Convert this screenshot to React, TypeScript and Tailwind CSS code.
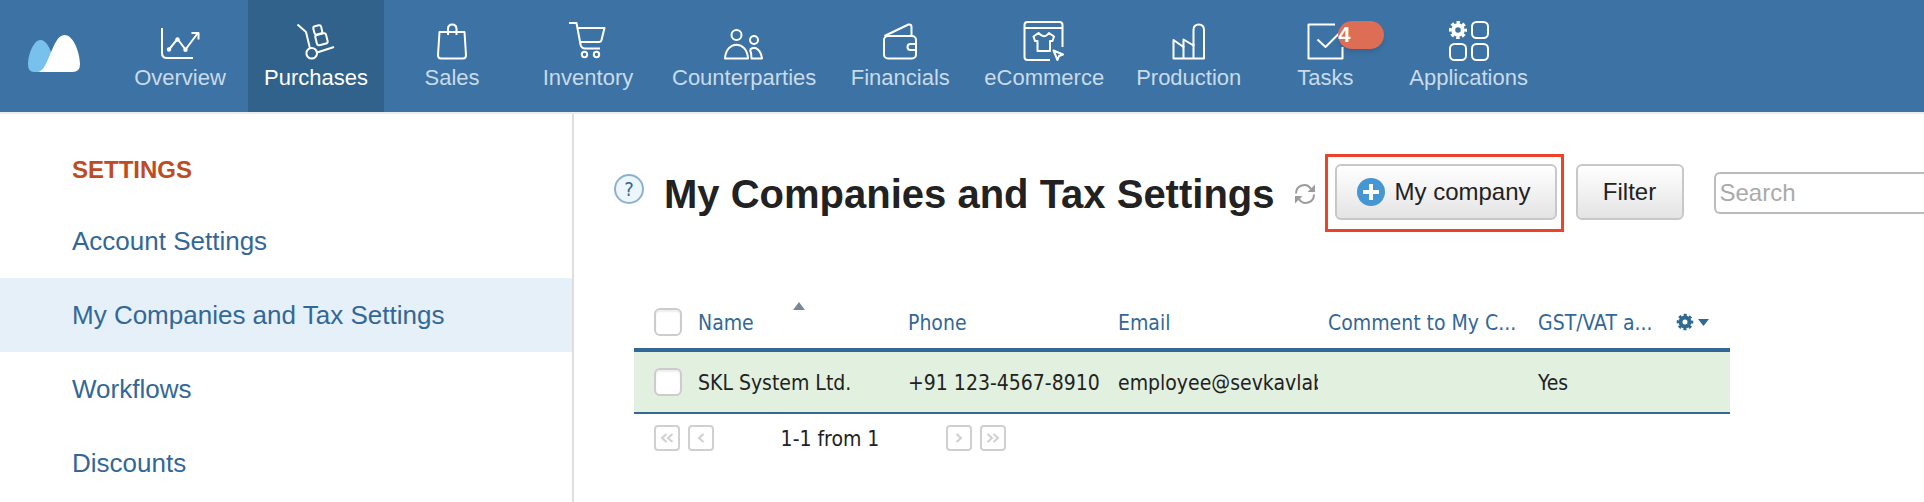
import type { ReactNode } from "react";

const navItems: { label: string; icon: ReactNode; active?: boolean; badge?: string }[] = [
  {
    label: "Overview",
    icon: (
      <>
        <path d="M3 7V32Q3 37 8 37H34" />
        <path d="M10 28.500L18.500 18L26.500 28.500L38.500 12.500" />
        <path d="M32.500 12H39.500V18.500" />
        <g fill="currentColor" stroke="none">
          <circle cx="10" cy="28.500" r="2.200" />
          <circle cx="18.500" cy="18.500" r="2.200" />
          <circle cx="26.500" cy="28.800" r="2.200" />
        </g>
      </>
    ),
  },
  {
    label: "Purchases",
    active: true,
    icon: (
      <>
        <path d="M2.500 3.500L11 11L15 27.500" />
        <circle cx="16.700" cy="32.300" r="5.300" />
        <path d="M22 31.500L39 26" />
        <rect x="18.800" y="4.700" width="8" height="8.500" rx="2" transform="rotate(-14 22.800 9)" />
        <rect x="21" y="13" width="11" height="10.500" rx="2" transform="rotate(-14 26.500 18.300)" />
      </>
    ),
  },
  {
    label: "Sales",
    icon: (
      <>
        <path d="M8.500 11H33.500L35 34Q35 37.500 32 37.500H10Q7 37.500 7 34Z" />
        <path d="M17 14V8Q17 3.500 21.250 3.500Q25.500 3.500 25.500 8V14" />
      </>
    ),
  },
  {
    label: "Inventory",
    icon: (
      <>
        <path d="M2 2H9.500L13.500 23.500Q14.500 27.500 18 27.500H33" />
        <path d="M10.500 7H37.500L34.500 19Q34 21 32 21H13" />
        <circle cx="17.500" cy="33.500" r="2.700" />
        <circle cx="29.500" cy="33.500" r="2.700" />
      </>
    ),
  },
  {
    label: "Counterparties",
    icon: (
      <>
        <circle cx="13.500" cy="14" r="5" />
        <path d="M2 37.500C3 19 24 19 25 37.500Z" />
        <circle cx="31" cy="19" r="4" />
        <path d="M27 28.500C33 24 38 30 39 37.500H28.500Q28.500 32 27 28.500" />
      </>
    ),
  },
  {
    label: "Financials",
    icon: (
      <>
        <rect x="5" y="15" width="32" height="22.500" rx="4" />
        <path d="M5.500 15L29.500 3.500Q32.500 3 32.500 6V14.500" />
        <path d="M37 23H31.500Q28.500 23 28.500 26T31.500 29H37" />
      </>
    ),
  },
  {
    label: "eCommerce",
    icon: (
      <>
        <path d="M39.500 26V4Q39.500 1 36.500 1H4.500Q1.500 1 1.500 4V36Q1.500 39 4.500 39H27" />
        <path d="M2 7H39" />
        <path d="M15.500 12L10.500 15.500L12 20H14.500V30H27V20H29.500L31 15.500L26 12Q21 18.500 15.500 12Z" />
        <path d="M30.500 29.500L40 33.500L36 35L34.500 39Z" />
      </>
    ),
  },
  {
    label: "Production",
    icon: (
      <>
        <path d="M5.500 37.500V19L15.500 26V18.500L25.500 24.500V9Q25.500 3.500 30.750 3.500T36 9V37.500Z" />
        <path d="M15.500 25V37.500M25.500 23V37.500" />
      </>
    ),
  },
  {
    label: "Tasks",
    badge: "4",
    icon: (
      <>
        <path d="M31 3.500H4.500V37.500H38.500V26" />
        <path d="M13.500 18.500L21.500 26L36 11.500" />
      </>
    ),
  },
  {
    label: "Applications",
    icon: (
      <>
        <rect x="24" y="1" width="16" height="16" rx="4.500" />
        <rect x="2" y="23" width="16" height="16" rx="4.500" />
        <rect x="24" y="23" width="16" height="16" rx="4.500" />
        <circle cx="10" cy="9" r="4.800" strokeWidth="4" />
        <circle cx="10" cy="9" r="7.600" strokeWidth="2.800" strokeDasharray="3.400 2.568" strokeDashoffset="1.700" />
      </>
    ),
  },
];

const sidebarItems = ["Account Settings", "My Companies and Tax Settings", "Workflows", "Discounts"];

function Logo() {
  return (
    <svg viewBox="0 0 52 38" className="h-[38px] w-[52px]" aria-hidden="true">
      <path d="M0 29C0 19 6 5 12.500 5C18 5 22 13 24.500 21L14 37H6Q0 37 0 29Z" fill="#78c1ed" />
      <path d="M10 37C21 36 24 0 36.500 0C46 0 52 19 52 29Q52 37 44.500 37Z" fill="#fff" />
    </svg>
  );
}

function TopNav() {
  return (
    <nav className="flex h-[114px] items-stretch border-b-2 border-[#ebebeb] bg-[#3d72a4]">
      <a href="#home" aria-label="Home" className="flex w-28 shrink-0 items-center pb-1 pl-7">
        <Logo />
      </a>
      {navItems.map((item) => (
        <a
          key={item.label}
          href={`#${item.label.toLowerCase()}`}
          className={`flex min-w-[136px] shrink-0 flex-col items-center px-4 pt-[21px] text-[22px] leading-7 ${
            item.active ? "bg-[#31628b] text-white" : "text-[#c8dbea]"
          }`}
        >
          <span className="relative mb-px text-white">
            <svg
              viewBox="0 0 42 42"
              className="h-[42px] w-[42px] overflow-visible"
              fill="none"
              stroke="currentColor"
              strokeWidth="2"
              strokeLinejoin="round"
              aria-hidden="true"
            >
              {item.icon}
            </svg>
            {item.badge && (
              <span className="absolute top-0 left-[34px] h-7 w-[46px] rounded-full bg-[#de6d55] font-bold shadow-md">
                {item.badge}
              </span>
            )}
          </span>
          {item.label}
        </a>
      ))}
    </nav>
  );
}

function Sidebar() {
  return (
    <aside className="w-[574px] shrink-0 border-r-2 border-[#dedede]">
      <h2 className="flex h-[90px] items-center pt-[22px] pl-[72px] text-2xl font-bold text-[#be4b24]">SETTINGS</h2>
      <ul>
        {sidebarItems.map((label) => (
          <li key={label}>
            <a
              href="#settings"
              className={`flex h-[74px] items-center pl-[72px] text-[26px] text-[#336896] ${
                label === "My Companies and Tax Settings" ? "bg-[#e6f0f9]" : ""
              }`}
            >
              {label}
            </a>
          </li>
        ))}
      </ul>
    </aside>
  );
}

function Toolbar() {
  const button =
    "flex h-14 items-center rounded-md border-2 border-[#c8c8c8] bg-linear-to-b from-white to-[#e4e4e4] text-2xl text-[#222]";

  return (
    <div className="flex h-[78px] items-center">
      <button
        aria-label="Help"
        className="mb-2 flex size-[30px] shrink-0 items-center justify-center rounded-full border-2 border-[#8bb1d0] bg-[#eef6fd] font-['DejaVu_Sans_Condensed',sans-serif] text-xl text-[#336896]"
      >
        ?
      </button>
      <h1 className="mt-0.5 ml-5 shrink-0 text-[40px] font-bold text-[#222]">My Companies and Tax Settings</h1>
      <button aria-label="Refresh" className="mt-0.5 ml-5 shrink-0">
        <svg viewBox="0 0 20 20" className="size-5" fill="none" stroke="#9c9c9c" strokeWidth="2" aria-hidden="true">
          <path d="M1 9.500C1 1 11.500 -2 16 5M19 10.500C19 19 8.500 22 4 15" />
          <path d="M20 0.500V8H12.500ZM0 19.500V12H7.500Z" fill="#9c9c9c" stroke="none" />
        </svg>
      </button>
      <div className="ml-[10px] shrink-0 border-3 border-[#ee4328] pt-[7px] pr-1 pb-[9px] pl-[7px]">
        <button className={`${button} w-[222px] gap-[10px] pl-5`}>
          <svg viewBox="0 0 28 28" className="size-7" aria-hidden="true">
            <circle cx="14" cy="14" r="14" fill="#4596d2" />
            <path d="M14 6V22M6 14H22" stroke="#fff" strokeWidth="4" />
          </svg>
          My company
        </button>
      </div>
      <button className={`${button} mb-0.5 ml-3 w-[108px] shrink-0 justify-center`}>Filter</button>
      <input
        type="search"
        aria-label="Search"
        placeholder="Search"
        className="ml-[30px] h-[42px] w-[300px] shrink-0 rounded-md border-2 border-[#bbb] bg-white px-1 text-2xl placeholder:text-[#aaa]"
      />
    </div>
  );
}

function CheckBox({ label }: { label: string }) {
  return (
    <input
      type="checkbox"
      aria-label={label}
      className="block size-7 appearance-none rounded-md border-2 border-[#ccc] bg-white shadow-[inset_0_2px_2px_#eee]"
    />
  );
}

function PageButton({ label, path }: { label: string; path: string }) {
  return (
    <button
      aria-label={label}
      className="flex size-[26px] items-center justify-center rounded-sm border-2 border-[#d0d0d0] bg-white"
    >
      <svg viewBox="0 0 16 16" className="size-4" fill="none" stroke="#d0d0d0" strokeWidth="2" aria-hidden="true">
        <path d={path} />
      </svg>
    </button>
  );
}

function CompaniesTable() {
  return (
    <div className="mt-14 ml-5 w-[1096px] font-['DejaVu_Sans_Condensed','DejaVu_Sans',sans-serif] text-[21px] text-[#222]">
      <table className="w-full table-fixed border-collapse text-left">
        <colgroup>
          <col className="w-16" />
          <col className="w-[210px]" />
          <col className="w-[210px]" />
          <col className="w-[210px]" />
          <col className="w-[210px]" />
          <col className="w-[130px]" />
          <col />
        </colgroup>
        <thead>
          <tr className="h-[62px] border-b-4 border-[#336896] text-[#336896] [&>th]:font-normal">
            <th className="pt-2 pl-5">
              <CheckBox label="Select all" />
            </th>
            <th className="pt-3">
              <div className="relative">
                Name
                <svg viewBox="0 0 12 8" className="absolute -top-1.5 left-[95px] h-2 w-3" aria-hidden="true">
                  <path d="M6 0L12 8H0Z" fill="#7b8798" />
                </svg>
              </div>
            </th>
            <th className="pt-3">Phone</th>
            <th className="pt-3">Email</th>
            <th className="pt-3 whitespace-nowrap">Comment to My C...</th>
            <th className="pt-3 whitespace-nowrap">GST/VAT a...</th>
            <th className="pt-2 pl-2">
              <button aria-label="Table settings" className="flex items-center gap-1">
                <svg viewBox="0 0 18 18" className="size-[18px]" fill="none" stroke="#2f6a92" aria-hidden="true">
                  <circle cx="9" cy="9" r="4.500" strokeWidth="4" />
                  <circle cx="9" cy="9" r="7" strokeWidth="2.600" strokeDasharray="3 2.498" strokeDashoffset="1.500" />
                </svg>
                <svg viewBox="0 0 11 7" className="h-[7px] w-[11px]" aria-hidden="true">
                  <path d="M0 0H11L5.500 7Z" fill="#2f6a92" />
                </svg>
              </button>
            </th>
          </tr>
        </thead>
        <tbody>
          <tr className="h-[63px] border-b-2 border-[#336896] bg-[#e2f0df]">
            <td className="pl-5">
              <CheckBox label="Select SKL System Ltd." />
            </td>
            <td className="pt-1">SKL System Ltd.</td>
            <td className="pt-1 whitespace-nowrap">+91 123-4567-8910</td>
            <td className="pt-1">
              <div className="w-[200px] overflow-hidden whitespace-nowrap">employee@sevkavlab</div>
            </td>
            <td />
            <td className="pt-1">Yes</td>
            <td />
          </tr>
        </tbody>
      </table>
      <div className="mt-1.5 flex items-center gap-2 pl-5">
        <PageButton label="First page" path="M7.500 4L3 8L7.500 12M13.500 4L9 8L13.500 12" />
        <PageButton label="Previous page" path="M10.500 4L6 8L10.500 12" />
        <span className="w-[216px] pt-1 text-center">1-1 from 1</span>
        <PageButton label="Next page" path="M5.500 4L10 8L5.500 12" />
        <PageButton label="Last page" path="M2.500 4L7 8L2.500 12M8.500 4L13 8L8.500 12" />
      </div>
    </div>
  );
}

export default function App() {
  return (
    <div className="flex min-h-screen flex-col overflow-hidden bg-white font-['Liberation_Sans',Arial,sans-serif]">
      <TopNav />
      <div className="flex grow">
        <Sidebar />
        <main className="min-w-0 grow overflow-hidden pt-10 pl-10">
          <Toolbar />
          <CompaniesTable />
        </main>
      </div>
    </div>
  );
}
